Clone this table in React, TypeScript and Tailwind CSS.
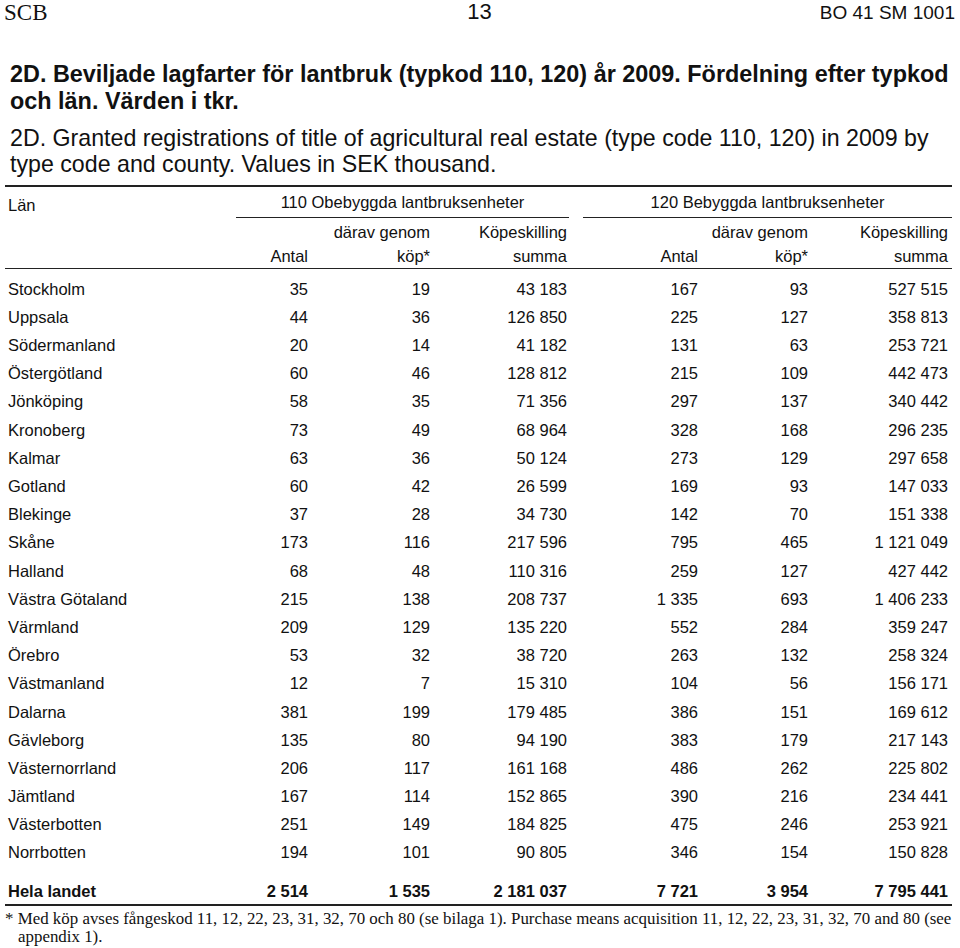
const rows: [string, string, string, string, string, string, string][] = [
  ['Stockholm', '35', '19', '43 183', '167', '93', '527 515'],
  ['Uppsala', '44', '36', '126 850', '225', '127', '358 813'],
  ['Södermanland', '20', '14', '41 182', '131', '63', '253 721'],
  ['Östergötland', '60', '46', '128 812', '215', '109', '442 473'],
  ['Jönköping', '58', '35', '71 356', '297', '137', '340 442'],
  ['Kronoberg', '73', '49', '68 964', '328', '168', '296 235'],
  ['Kalmar', '63', '36', '50 124', '273', '129', '297 658'],
  ['Gotland', '60', '42', '26 599', '169', '93', '147 033'],
  ['Blekinge', '37', '28', '34 730', '142', '70', '151 338'],
  ['Skåne', '173', '116', '217 596', '795', '465', '1 121 049'],
  ['Halland', '68', '48', '110 316', '259', '127', '427 442'],
  ['Västra Götaland', '215', '138', '208 737', '1 335', '693', '1 406 233'],
  ['Värmland', '209', '129', '135 220', '552', '284', '359 247'],
  ['Örebro', '53', '32', '38 720', '263', '132', '258 324'],
  ['Västmanland', '12', '7', '15 310', '104', '56', '156 171'],
  ['Dalarna', '381', '199', '179 485', '386', '151', '169 612'],
  ['Gävleborg', '135', '80', '94 190', '383', '179', '217 143'],
  ['Västernorrland', '206', '117', '161 168', '486', '262', '225 802'],
  ['Jämtland', '167', '114', '152 865', '390', '216', '234 441'],
  ['Västerbotten', '251', '149', '184 825', '475', '246', '253 921'],
  ['Norrbotten', '194', '101', '90 805', '346', '154', '150 828'],
];

const total = ['Hela landet', '2 514', '1 535', '2 181 037', '7 721', '3 954', '7 795 441'];

// 8 kolumner: län | antal | därav | summa | mellanrum | antal | därav | summa
const grid = 'grid grid-cols-[231px_72px_122px_139px_14px_115px_110px_144px]';

function Row({ cells, className }: { cells: string[]; className: string }) {
  return (
    <div className={`${grid} items-center ${className}`}>
      <div className="pl-[3px]">{cells[0]}</div>
      <div className="text-right">{cells[1]}</div>
      <div className="text-right">{cells[2]}</div>
      <div className="text-right pr-[2px]">{cells[3]}</div>
      <div />
      <div className="text-right">{cells[4]}</div>
      <div className="text-right">{cells[5]}</div>
      <div className="text-right pr-[4px]">{cells[6]}</div>
    </div>
  );
}

export default function App() {
  return (
    <div className="w-[960px] h-[948px] bg-white text-[#111] overflow-hidden font-['Liberation_Sans',Arial,sans-serif]">
      {/* sidhuvud */}
      <div className="flex items-center justify-between h-[24px] pl-[4px] pr-[5px]">
        <span className="w-[200px] text-[23px] leading-none font-['Liberation_Serif',serif]">SCB</span>
        <span className="text-[22px] leading-none">13</span>
        <span className="w-[200px] text-right text-[19px] leading-none">BO 41 SM 1001</span>
      </div>

      {/* rubriker */}
      <div className="mt-[37px] px-[10px] text-[23.4px] leading-[27px] font-bold whitespace-nowrap">
        2D. Beviljade lagfarter för lantbruk (typkod 110, 120) år 2009. Fördelning efter typkod
        <br />
        och län. Värden i tkr.
      </div>
      <div className="mt-[10px] px-[10px] text-[23.2px] leading-[26px] whitespace-nowrap">
        2D. Granted registrations of title of agricultural real estate (type code 110, 120) in 2009 by
        <br />
        type code and county. Values in SEK thousand.
      </div>

      {/* tabell */}
      <div className="mt-[8px] ml-[5px] w-[947px] text-[16.5px]">
        <div className="border-t-2 border-[#222]" />
        <div className={`${grid} h-[24px]`}>
          <div className="pl-[3px] pt-[6px]">Län</div>
          <div className="col-span-3 border-b border-[#222] flex items-center justify-center">
            110 Obebyggda lantbruksenheter
          </div>
          <div />
          <div className="col-span-3 border-b border-[#222] flex items-center justify-center">
            120 Bebyggda lantbruksenheter
          </div>
        </div>
        <div className={`${grid} pt-[9px] leading-[24px] border-b border-[#222]`}>
          <div />
          <div className="text-right self-end">Antal</div>
          <div className="text-right">därav genom<br />köp*</div>
          <div className="text-right pr-[2px]">Köpeskilling<br />summa</div>
          <div />
          <div className="text-right self-end">Antal</div>
          <div className="text-right">därav genom<br />köp*</div>
          <div className="text-right pr-[4px]">Köpeskilling<br />summa</div>
        </div>
        <div className="pt-[6px]">
          {rows.map((r) => (
            <Row key={r[0]} cells={r} className="h-[28.2px]" />
          ))}
        </div>
        <div className="mt-[11px] border-b-2 border-[#222]">
          <Row cells={total} className="h-[26px] font-bold" />
        </div>
      </div>

      {/* fotnot */}
      <div className="mt-[4px] pl-[5px] text-[16.9px] leading-[18px] font-['Liberation_Serif',serif] whitespace-nowrap">
        <p className="pl-[13px] -indent-[13px]">
          * Med köp avses fångeskod 11, 12, 22, 23, 31, 32, 70 och 80 (se bilaga 1). Purchase means acquisition 11, 12, 22, 23, 31, 32, 70 and 80 (see
          <br />
          appendix 1).
        </p>
      </div>
    </div>
  );
}
